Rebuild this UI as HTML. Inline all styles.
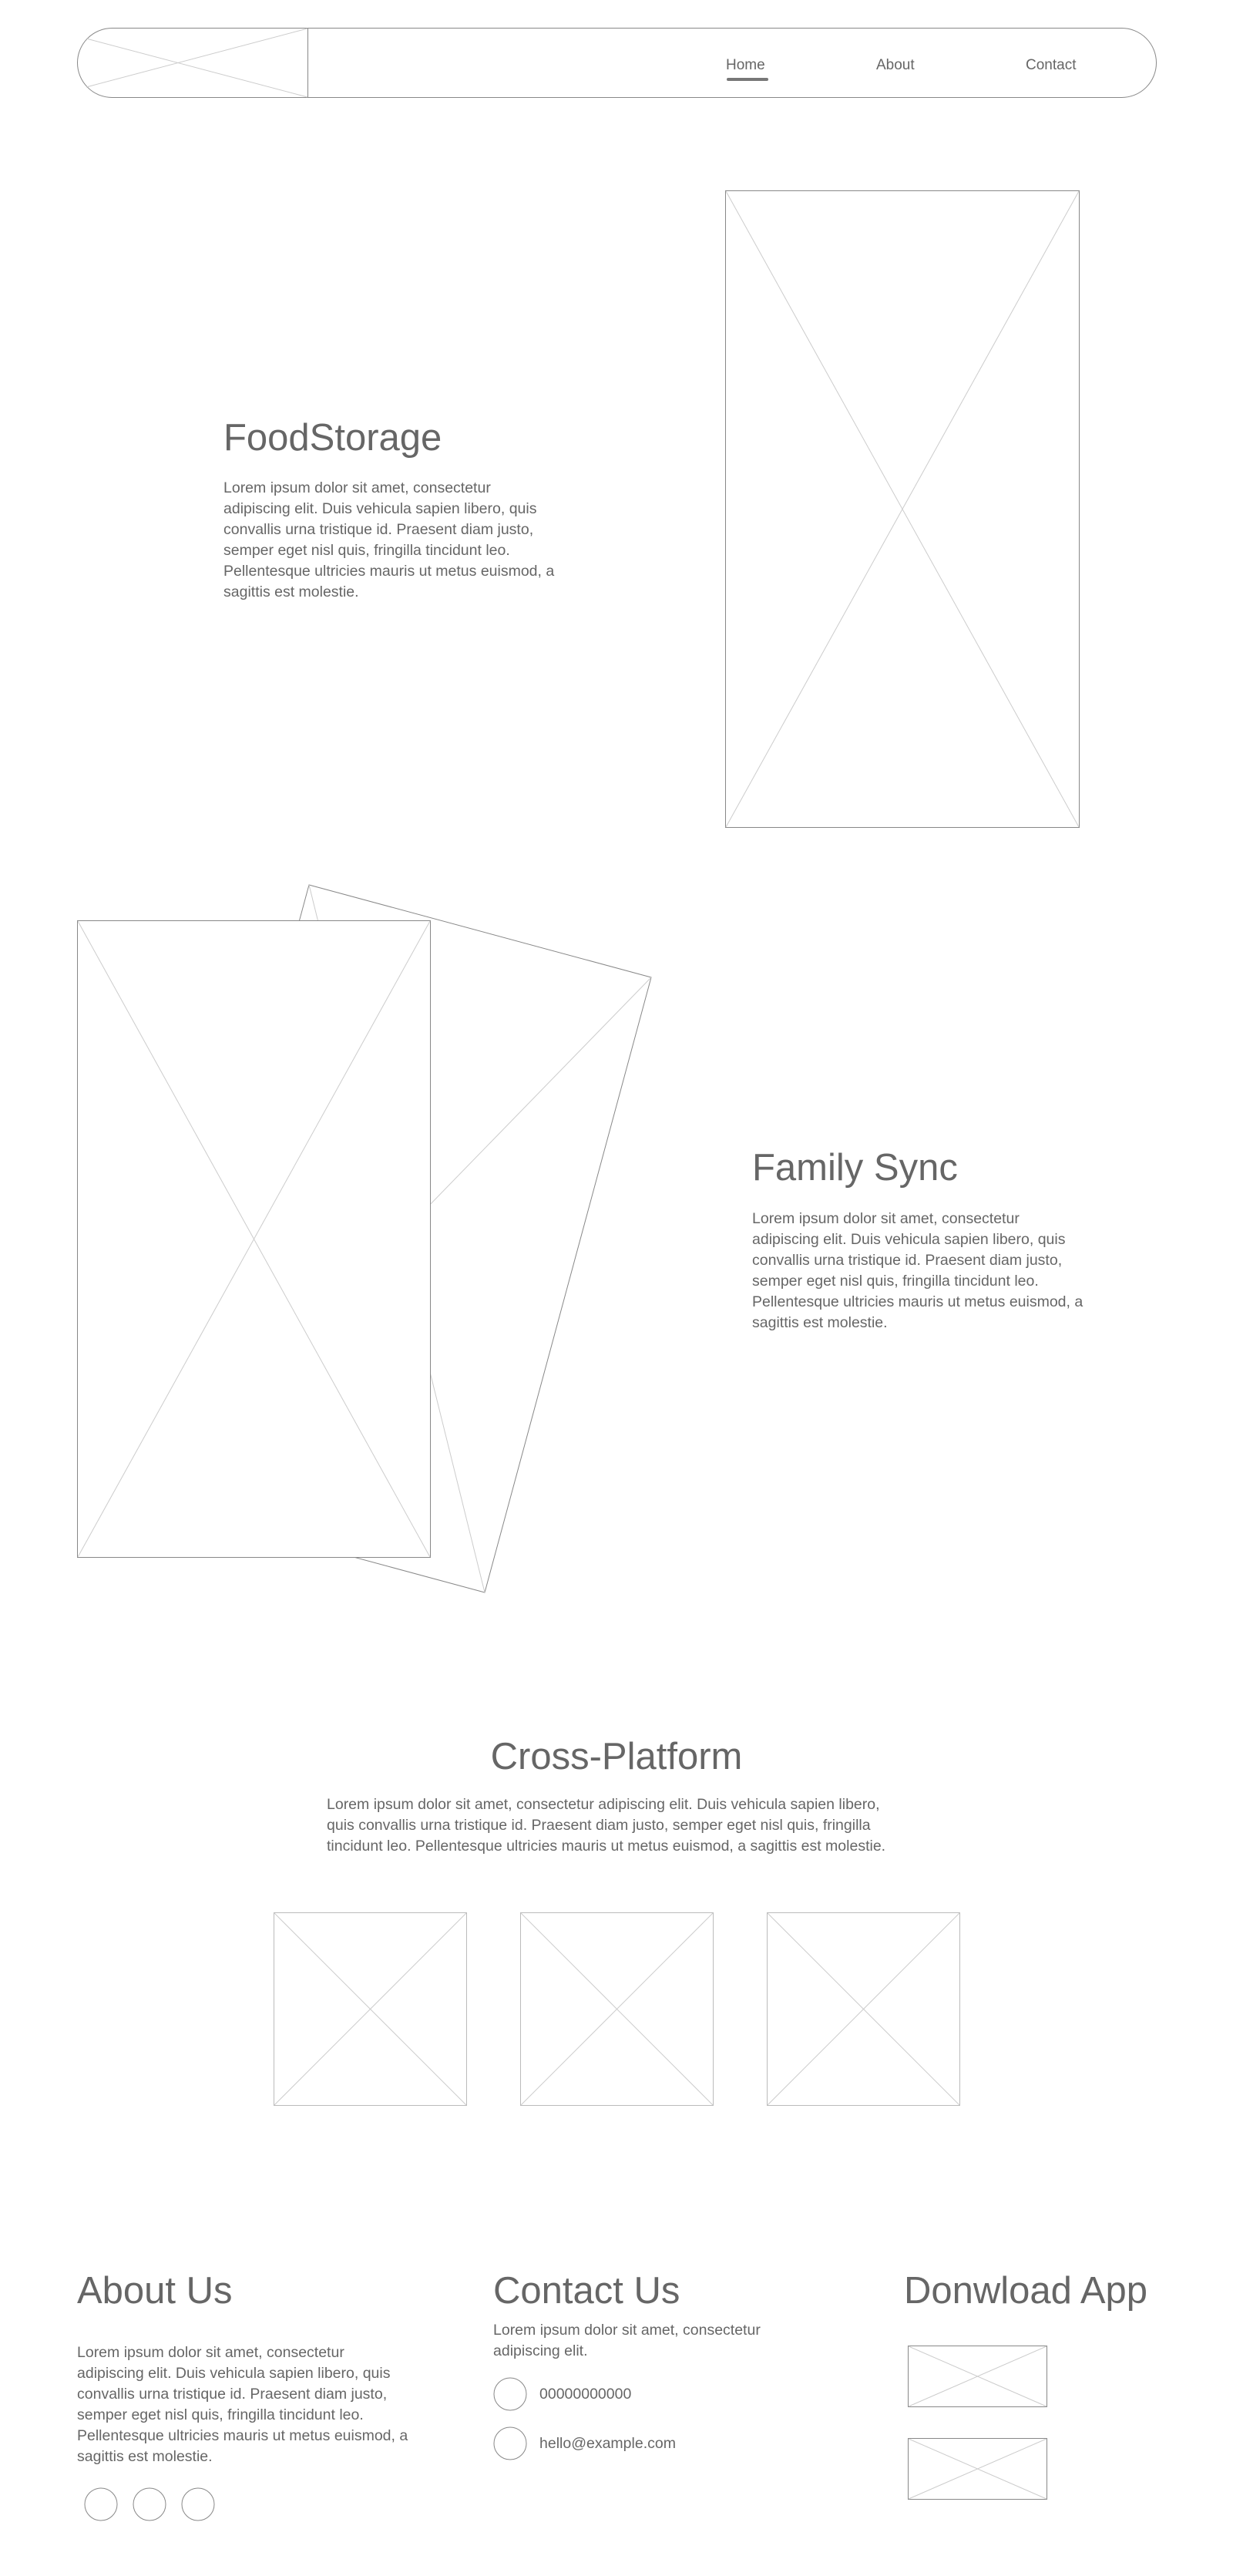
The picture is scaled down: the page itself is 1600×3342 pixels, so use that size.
<!DOCTYPE html>
<html><head><meta charset="utf-8"><style>
*{margin:0;padding:0;box-sizing:border-box}
body{width:1600px;height:3342px;background:#fff;position:relative;overflow:hidden;font-family:"Liberation Sans",sans-serif;color:#666}
.a{position:absolute}
svg{position:absolute;overflow:visible}
h1,h2{font-weight:normal;position:absolute;white-space:nowrap}
p{position:absolute;font-size:19.5px;line-height:27px;white-space:nowrap}
.nav{font-size:19px;position:absolute;top:74px}
</style></head><body>

<svg style="left:0;top:0" width="1600" height="3342">
 <rect x="100.5" y="36.5" width="1400" height="90" rx="45" fill="none" stroke="#888"/>
 <line x1="399.5" y1="37" x2="399.5" y2="126" stroke="#888"/>
 <line x1="112" y1="50" x2="399" y2="126" stroke="#ccc"/>
 <line x1="112" y1="113" x2="399" y2="37" stroke="#ccc"/>
 <rect x="943" y="101" width="54" height="4" rx="2" fill="#777"/>

 <rect x="941.5" y="247.5" width="459" height="826" fill="none" stroke="#888"/>
 <line x1="942" y1="248" x2="1400" y2="1073" stroke="#ccc"/>
 <line x1="1400" y1="248" x2="942" y2="1073" stroke="#ccc"/>

 <polygon points="401,1148 845,1268 629,2066 185,1946" fill="#fff" stroke="#888"/>
 <line x1="401" y1="1148" x2="629" y2="2066" stroke="#ccc"/>
 <line x1="845" y1="1268" x2="185" y2="1946" stroke="#ccc"/>
 <rect x="100.5" y="1194.5" width="458" height="826" fill="#fff" stroke="#888"/>
 <line x1="101" y1="1195" x2="558" y2="2020" stroke="#ccc"/>
 <line x1="558" y1="1195" x2="101" y2="2020" stroke="#ccc"/>

 <g stroke="#ccc" fill="none">
 <rect x="355.5" y="2481.5" width="250" height="250" stroke="#bbb"/>
 <line x1="356" y1="2482" x2="605" y2="2731"/><line x1="605" y1="2482" x2="356" y2="2731"/>
 <rect x="675.5" y="2481.5" width="250" height="250" stroke="#bbb"/>
 <line x1="676" y1="2482" x2="925" y2="2731"/><line x1="925" y1="2482" x2="676" y2="2731"/>
 <rect x="995.5" y="2481.5" width="250" height="250" stroke="#bbb"/>
 <line x1="996" y1="2482" x2="1245" y2="2731"/><line x1="1245" y1="2482" x2="996" y2="2731"/>
 </g>

 <g fill="none" stroke="#888">
 <circle cx="131" cy="3249" r="21"/>
 <circle cx="194" cy="3249" r="21"/>
 <circle cx="257" cy="3249" r="21"/>
 <circle cx="662" cy="3106" r="21"/>
 <circle cx="662" cy="3170" r="21"/>
 <rect x="1178.5" y="3043.5" width="180" height="79"/>
 <rect x="1178.5" y="3163.5" width="180" height="79"/>
 </g>
 <g stroke="#ccc">
 <line x1="1179" y1="3044" x2="1358" y2="3122"/><line x1="1358" y1="3044" x2="1179" y2="3122"/>
 <line x1="1179" y1="3164" x2="1358" y2="3242"/><line x1="1358" y1="3164" x2="1179" y2="3242"/>
 </g>
</svg>

<div class="nav" style="left:942px">Home</div>
<div class="nav" style="left:1137px">About</div>
<div class="nav" style="left:1331px">Contact</div>

<h1 class="a" style="left:290px;top:540px;font-size:49px">FoodStorage</h1>
<p style="left:290px;top:620px">Lorem ipsum dolor sit amet, consectetur<br>adipiscing elit. Duis vehicula sapien libero, quis<br>convallis urna tristique id. Praesent diam justo,<br>semper eget nisl quis, fringilla tincidunt leo.<br>Pellentesque ultricies mauris ut metus euismod, a<br>sagittis est molestie.</p>

<h1 class="a" style="left:976px;top:1487px;font-size:49px">Family Sync</h1>
<p style="left:976px;top:1568px">Lorem ipsum dolor sit amet, consectetur<br>adipiscing elit. Duis vehicula sapien libero, quis<br>convallis urna tristique id. Praesent diam justo,<br>semper eget nisl quis, fringilla tincidunt leo.<br>Pellentesque ultricies mauris ut metus euismod, a<br>sagittis est molestie.</p>

<h1 class="a" style="left:0;width:1600px;text-align:center;top:2251px;font-size:49px">Cross-Platform</h1>
<p style="left:424px;top:2328px">Lorem ipsum dolor sit amet, consectetur adipiscing elit. Duis vehicula sapien libero,<br>quis convallis urna tristique id. Praesent diam justo, semper eget nisl quis, fringilla<br>tincidunt leo. Pellentesque ultricies mauris ut metus euismod, a sagittis est molestie.</p>

<h2 class="a" style="left:100px;top:2944px;font-size:49px">About Us</h2>
<p style="left:100px;top:3039px">Lorem ipsum dolor sit amet, consectetur<br>adipiscing elit. Duis vehicula sapien libero, quis<br>convallis urna tristique id. Praesent diam justo,<br>semper eget nisl quis, fringilla tincidunt leo.<br>Pellentesque ultricies mauris ut metus euismod, a<br>sagittis est molestie.</p>

<h2 class="a" style="left:640px;top:2944px;font-size:49px">Contact Us</h2>
<p style="left:640px;top:3010px">Lorem ipsum dolor sit amet, consectetur<br>adipiscing elit.</p>
<p style="left:700px;top:3093px">00000000000</p>
<p style="left:700px;top:3157px">hello@example.com</p>

<h2 class="a" style="left:1173px;top:2944px;font-size:49px">Donwload App</h2>
</body></html>
